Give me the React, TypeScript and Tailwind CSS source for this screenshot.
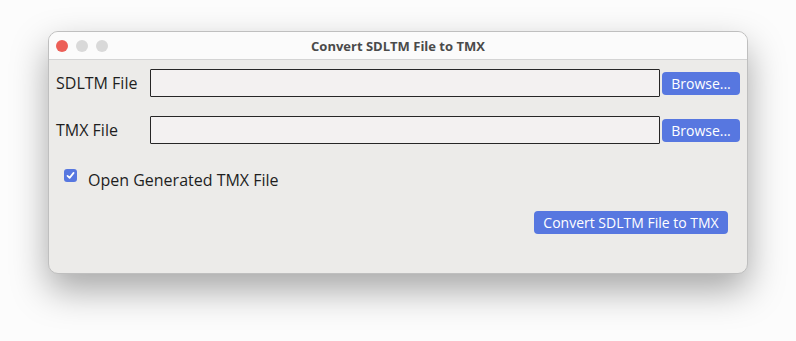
import React from "react";

function Light({ color }: { color: string }) {
  return <span className={`block w-[12px] h-[12px] rounded-full ${color}`} />;
}

function FileRow({ label }: { label: string }) {
  return (
    <div className="flex items-center h-[28px]">
      <span className="w-[94px] text-[16px] leading-[20px] text-[#1e1e1e]">{label}</span>
      <div className="w-[510px] h-[28px] border border-[#262626] rounded-[1px] bg-[#f3f1f1]" />
      <button className="ml-[2px] w-[78px] h-[23px] rounded-[4px] bg-[#5777e0] text-white text-[14px] leading-[23px] text-center">
        Browse...
      </button>
    </div>
  );
}

export default function App() {
  return (
    <div
      className="w-[796px] h-[341px] bg-[#fcfcfc] pt-[31px] pl-[48px]"
      style={{ fontFamily: '"Open Sans", "Noto Sans", sans-serif' }}
    >
      <div className="w-[700px] h-[243px] rounded-[10px] border border-[#bfbfbf] bg-[#ecebe9] overflow-hidden shadow-[0_16px_36px_rgba(0,0,0,0.34)]">
        {/* title bar */}
        <div className="h-[28px] bg-[#fbfbfb] border-b border-[#d4d4d4] grid grid-cols-[1fr_auto_1fr] items-center">
          <div className="flex items-center gap-[8px] pl-[7px]">
            <Light color="bg-[#ec5f57]" />
            <Light color="bg-[#d9d9d9]" />
            <Light color="bg-[#d9d9d9]" />
          </div>
          <span className="text-[13px] font-bold text-[#4a4a4a] leading-[16px]">Convert SDLTM File to TMX</span>
          <div />
        </div>

        {/* content */}
        <div className="pt-[9px] pl-[7px] pr-[7px]">
          <FileRow label="SDLTM File" />
          <div className="mt-[19px]">
            <FileRow label="TMX File" />
          </div>

          <div className="mt-[24px] flex items-start">
            <span className="ml-[8px] mt-[1px] w-[13px] h-[13px] rounded-[3px] bg-[#5777e0] flex items-center justify-center">
              <svg width="9" height="9" viewBox="0 0 9 9" fill="none">
                <path d="M1.5 4.8 L3.6 6.9 L7.6 1.9" stroke="white" strokeWidth="1.7" strokeLinecap="round" strokeLinejoin="round" />
              </svg>
            </span>
            <span className="ml-[11px] mt-[2px] text-[16px] leading-[20px] text-[#1e1e1e]">Open Generated TMX File</span>
          </div>

          <div className="mt-[21px] flex justify-end pr-[12px]">
            <button className="w-[194px] h-[23px] rounded-[4px] bg-[#5777e0] text-white text-[14px] leading-[23px] text-center">
              Convert SDLTM File to TMX
            </button>
          </div>
        </div>
      </div>
    </div>
  );
}
